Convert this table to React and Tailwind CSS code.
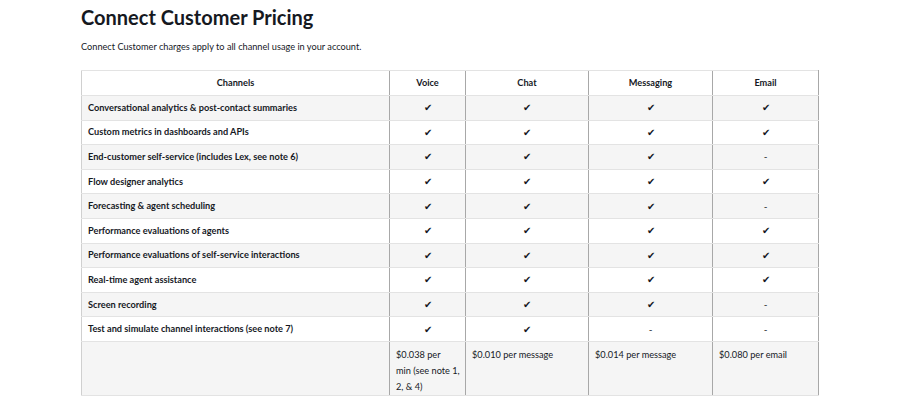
import React from "react";

const Y = "✔";
const rows = [
  ["Conversational analytics & post-contact summaries", Y, Y, Y, Y],
  ["Custom metrics in dashboards and APIs", Y, Y, Y, Y],
  ["End-customer self-service (includes Lex, see note 6)", Y, Y, Y, "-"],
  ["Flow designer analytics", Y, Y, Y, Y],
  ["Forecasting & agent scheduling", Y, Y, Y, "-"],
  ["Performance evaluations of agents", Y, Y, Y, Y],
  ["Performance evaluations of self-service interactions", Y, Y, Y, Y],
  ["Real-time agent assistance", Y, Y, Y, Y],
  ["Screen recording", Y, Y, Y, "-"],
  ["Test and simulate channel interactions (see note 7)", Y, Y, "-", "-"],
];

export default function App() {
  return (
    <div
      className="w-[900px] h-[400px] overflow-hidden bg-white text-[#16191f]"
      style={{ fontFamily: 'Lato, "Open Sans", sans-serif' }}
    >
      <div className="pl-[81px] pt-[3px]">
        <h1 className="text-[20px] leading-[28px] font-bold">Connect Customer Pricing</h1>
        <p className="mt-[10px] text-[9.2px] leading-[12px]">
          Connect Customer charges apply to all channel usage in your account.
        </p>
        <table className="mt-[17px] table-fixed border-collapse text-[9.2px] w-[737px]">
          <colgroup>
            <col className="w-[308px]" />
            <col className="w-[76px]" />
            <col className="w-[123px]" />
            <col className="w-[124px]" />
            <col className="w-[106px]" />
          </colgroup>
          <thead>
            <tr className="h-[25px]">
              {["Channels", "Voice", "Chat", "Messaging", "Email"].map((h, i) => (
                <th
                  key={h}
                  className={`border-y border-y-[#e3e3e3] ${i === 0 ? "border-l border-l-[#d0d0d0]" : "border-l border-l-[#a8a8a8]"} ${i === 4 ? "border-r border-r-[#a8a8a8]" : ""} font-bold text-center p-0`}
                >
                  {h}
                </th>
              ))}
            </tr>
          </thead>
          <tbody>
            {rows.map((r, ri) => (
              <tr key={ri} className={`h-[24.6px] ${ri % 2 === 0 ? "bg-[#f5f5f5]" : "bg-white"}`}>
                {r.map((c, ci) => (
                  <td
                    key={ci}
                    className={`border-b border-b-[#e3e3e3] ${ci === 0 ? "border-l border-l-[#d0d0d0] pl-[6px] font-bold text-left" : "border-l border-l-[#a8a8a8] text-center text-[10px]"} ${ci === 4 ? "border-r border-r-[#a8a8a8]" : ""} p-0`}
                  >
                    {c}
                  </td>
                ))}
              </tr>
            ))}
            <tr className="h-[53px] bg-[#f5f5f5] align-top">
              <td className="border-b border-b-[#e3e3e3] border-l border-l-[#d0d0d0] p-0"></td>
              <td className="border-b border-b-[#e3e3e3] border-l border-l-[#a8a8a8] pl-[6px] pr-0 pt-[5px] leading-[16px] whitespace-nowrap">
                $0.038 per<br />min (see note 1,<br />2, &amp; 4)
              </td>
              <td className="border-b border-b-[#e3e3e3] border-l border-l-[#a8a8a8] pl-[6px] pt-[5px] leading-[16px]">$0.010 per message</td>
              <td className="border-b border-b-[#e3e3e3] border-l border-l-[#a8a8a8] pl-[6px] pt-[5px] leading-[16px]">$0.014 per message</td>
              <td className="border-b border-b-[#e3e3e3] border-l border-l-[#a8a8a8] border-r border-r-[#a8a8a8] pl-[6px] pt-[5px] leading-[16px]">$0.080 per email</td>
            </tr>
          </tbody>
        </table>
      </div>
    </div>
  );
}
